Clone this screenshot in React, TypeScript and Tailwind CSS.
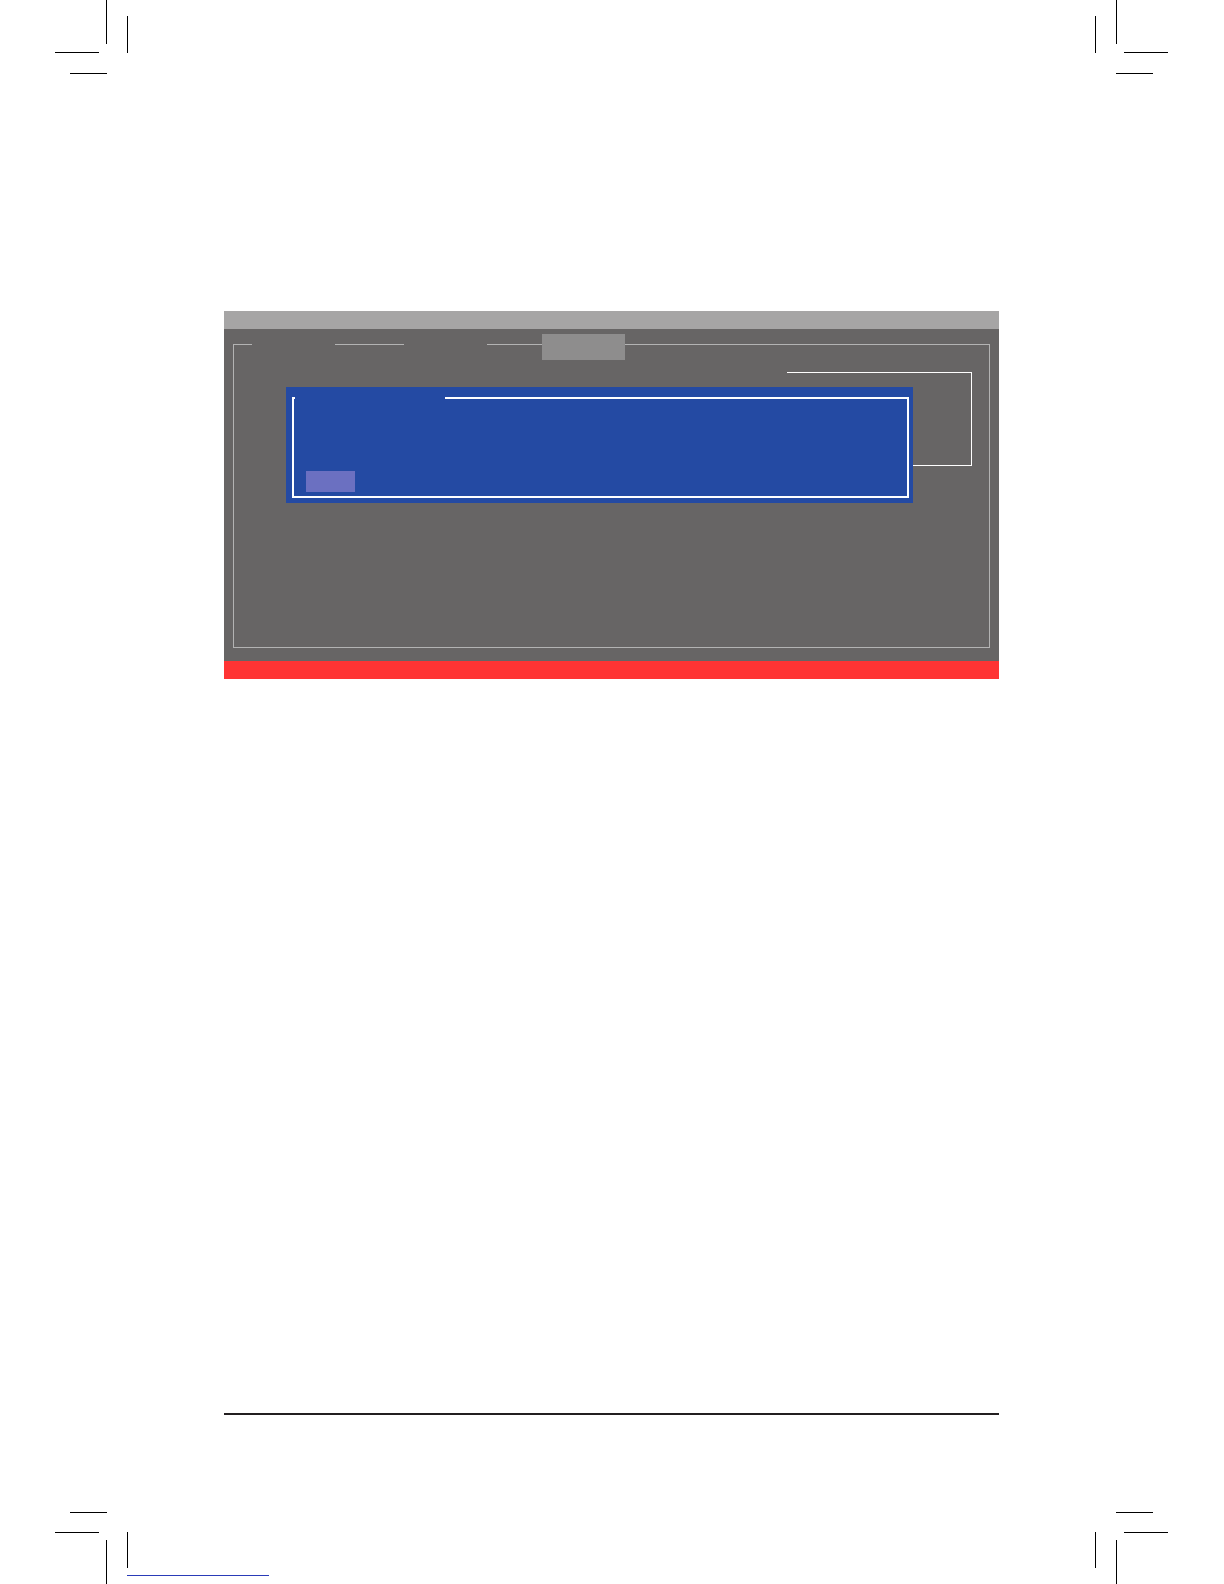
// Manual page: BIOS dialog screenshot (text blanked) with print crop marks

const CROP_MARKS = [
  // top left
  'left-[106px] top-0 w-px h-[44px]',
  'left-[127px] top-[16px] w-px h-[37px]',
  'left-[55px] top-[52px] w-[44px] h-px',
  'left-[70px] top-[73px] w-[37px] h-px',
  // top right
  'left-[1095px] top-[16px] w-px h-[37px]',
  'left-[1116px] top-0 w-px h-[44px]',
  'left-[1124px] top-[52px] w-[44px] h-px',
  'left-[1116px] top-[73px] w-[37px] h-px',
  // bottom left
  'left-[70px] top-[1512px] w-[37px] h-px',
  'left-[55px] top-[1532px] w-[44px] h-px',
  'left-[106px] top-[1540px] w-px h-[44px]',
  'left-[127px] top-[1532px] w-px h-[36px]',
  // bottom right
  'left-[1116px] top-[1512px] w-[37px] h-px',
  'left-[1124px] top-[1532px] w-[44px] h-px',
  'left-[1095px] top-[1532px] w-px h-[36px]',
  'left-[1116px] top-[1540px] w-px h-[44px]',
]

function Dialog() {
  return (
    <div className="col-start-1 row-start-1 self-start justify-self-start ml-[52px] mt-[42px] w-[627px] h-[116px] bg-[#244aa3] pt-[10px] pl-[6px] pr-[4px] pb-[5px] flex flex-col">
      <div className="flex-1 flex flex-col border-x-2 border-b-2 border-white">
        {/* top edge, broken where the title sits */}
        <div className="flex h-[2px]">
          <div className="w-[1px] bg-white" />
          <div className="w-[150px]" />
          <div className="flex-1 bg-white" />
        </div>
        <div className="ml-[12px] mt-[72px] w-[49px] h-[21px] bg-[#6b70c1]" />
      </div>
    </div>
  )
}

function HelpBracket() {
  return (
    <div className="col-start-1 row-start-1 self-start justify-self-start ml-[553px] mt-[27px] w-[185px] h-[94px] border-t border-r border-b border-white" />
  )
}

function BiosScreen() {
  return (
    <div className="ml-[224px] mt-[311px] w-[775px] h-[368px] flex flex-col">
      <div className="h-[18px] bg-[#a6a5a5]" />
      <div className="flex-1 bg-[#676565] pt-[15px] pl-[9px] pr-[9px] pb-[13px] flex flex-col">
        <div className="flex-1 flex flex-col border-x border-b border-[#b3b3b3]">
          {/* tab row on the frame's top edge */}
          <div className="flex items-start h-px">
            <div className="w-[18px] h-px bg-[#b3b3b3]" />
            <div className="w-[83px]" />
            <div className="w-[69px] h-px bg-[#b3b3b3]" />
            <div className="w-[83px]" />
            <div className="w-[55px] h-px bg-[#b3b3b3]" />
            <div className="w-[83px] h-[26px] -mt-[10px] bg-[#8e8d8d]" />
            <div className="flex-1 h-px bg-[#b3b3b3]" />
          </div>
          <div className="grid">
            <HelpBracket />
            <Dialog />
          </div>
        </div>
      </div>
      <div className="h-[18px] bg-[#ff3434]" />
    </div>
  )
}

export default function App() {
  return (
    <div className="relative w-[1224px] h-[1584px] bg-white overflow-hidden flex flex-col">
      {CROP_MARKS.map((c, i) => (
        <div key={i} className={'absolute bg-black ' + c} />
      ))}
      <div className="absolute left-[127px] top-[1575px] w-[142px] h-px bg-[#2a3bb8]" />

      <BiosScreen />

      <div className="ml-[224px] mt-[734px] w-[775px] h-[2px] bg-[#231f20]" />
    </div>
  )
}
